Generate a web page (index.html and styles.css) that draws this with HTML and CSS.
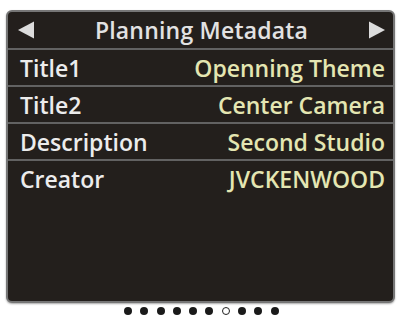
FILE: index.html
```html
<!DOCTYPE html>
<html>
<head>
<meta charset="utf-8">
<link rel="stylesheet" href="styles.css">
</head>
<body>
<div class="page">
  <div class="screen">
    <div class="header">
      <svg class="arrow" width="17" height="18" viewBox="0 0 17 18"><polygon points="0,9 16,0.5 16,17.5" fill="#dcdcdc"/></svg>
      <span class="title">Planning Metadata</span>
      <svg class="arrow" width="17" height="18" viewBox="0 0 17 18"><polygon points="17,9 1,0.5 1,17.5" fill="#dcdcdc"/></svg>
    </div>
    <div class="row line"><span class="label">Title1</span><span class="value">Openning Theme</span></div>
    <div class="row line"><span class="label">Title2</span><span class="value">Center Camera</span></div>
    <div class="row line"><span class="label">Description</span><span class="value">Second Studio</span></div>
    <div class="row"><span class="label">Creator</span><span class="value">JVCKENWOOD</span></div>
  </div>
  <div class="dots">
    <span class="dot"></span><span class="dot"></span><span class="dot"></span><span class="dot"></span><span class="dot"></span><span class="dot"></span><span class="dot open"></span><span class="dot"></span><span class="dot"></span><span class="dot"></span>
  </div>
</div>
</body>
</html>
```
FILE: styles.css
```css
html, body {
  margin: 0;
  padding: 0;
  background: #ffffff;
}
.page {
  width: 398px;
  height: 318px;
  padding: 10px 0 0 6px;
  box-sizing: border-box;
  font-family: "Open Sans", "DejaVu Sans", sans-serif;
}
.screen {
  width: 389px;
  height: 293px;
  box-sizing: border-box;
  border: 2px solid #767676;
  border-radius: 6px;
  background: #231f1c;
  box-shadow: 0 1px 2px rgba(0,0,0,0.35);
  display: flex;
  flex-direction: column;
}
.header {
  height: 36px;
  border-bottom: 2px solid #626262;
  display: flex;
  align-items: center;
  justify-content: space-between;
  padding: 0 8px 0 10px;
}
.title {
  color: #e2e2e2;
  font-size: 23px;
  font-weight: 600;
  letter-spacing: 0.2px;
}
.arrow {
  display: block;
}
.row {
  height: 35px;
  display: flex;
  align-items: center;
  justify-content: space-between;
  padding: 0 8px 0 12px;
  font-size: 23px;
  font-weight: 600;
}
.row.line {
  border-bottom: 2px solid #626262;
}
.label {
  color: #ececec;
}
.value {
  color: #e4e6b2;
}
.dots {
  display: flex;
  justify-content: flex-start;
  gap: 8.3px;
  margin: 4px 0 0 0;
  padding-left: 118px;
}
.dot {
  width: 8px;
  height: 8px;
  border-radius: 50%;
  background: #1a1a1a;
  box-sizing: border-box;
}
.dot.open {
  background: #ffffff;
  border: 1.5px solid #222222;
}
```
